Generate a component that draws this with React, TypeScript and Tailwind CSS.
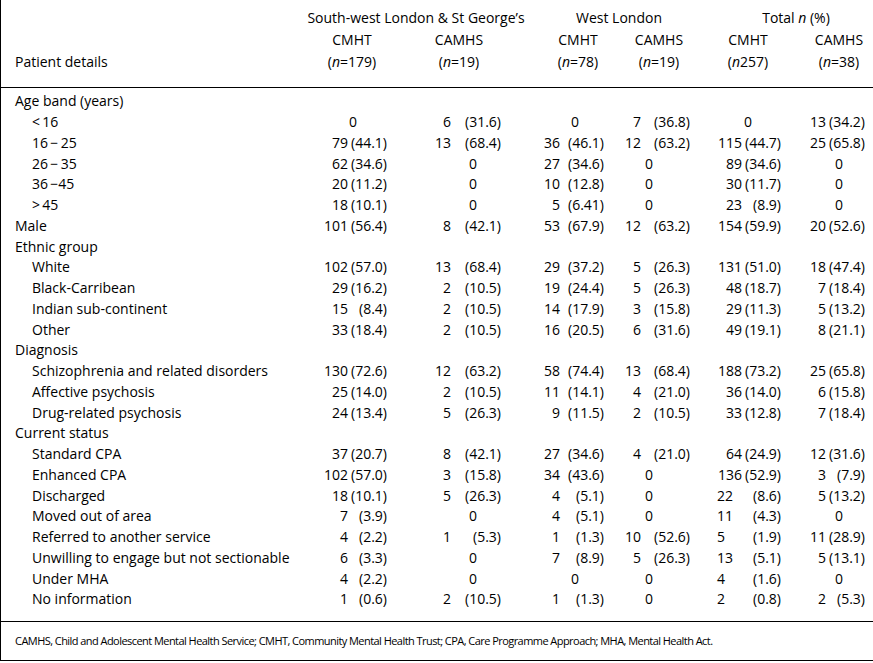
import React from "react";

type Cell = null | [string, string] | [string, string, "l"];

type Row = {
  label: string;
  cat?: boolean;
  cells?: Cell[];
};

// per-column geometry: column width, count span, pct span, zero offset, header offset
const cols = [
  { w: "w-[110px]", cnt: "w-[47px] text-right", cntL: "w-[47px] text-right", pct: "w-[39px]", zero: "ml-[32px]", hdr: "ml-[11px]" },
  { w: "w-[105px]", cnt: "w-[40px] text-right", cntL: "w-[40px] text-right", pct: "w-[50px]", zero: "ml-[42px]", hdr: "ml-[8px]" },
  { w: "w-[95px]", cnt: "w-[44px] text-right", cntL: "w-[44px] text-right", pct: "w-[44px]", zero: "ml-[39px]", hdr: "ml-[22px]" },
  { w: "w-[90px]", cnt: "w-[30px] text-right", cntL: "w-[30px] text-right", pct: "w-[49px]", zero: "ml-[18px]", hdr: "ml-[8px]" },
  { w: "w-[95px]", cnt: "w-[41px] text-right", cntL: "w-[41px] pl-[16px] text-left", pct: "w-[39px]", zero: "ml-[27px]", hdr: "ml-[7px]" },
  { w: "w-[78px]", cnt: "w-[30px] text-right", cntL: "w-[30px] text-right", pct: "w-[39px]", zero: "ml-[23px]", hdr: "ml-[3px]" },
];

const subHeads = [
  ["CMHT", "179"],
  ["CAMHS", "19"],
  ["CMHT", "78"],
  ["CAMHS", "19"],
  ["CMHT", "257"],
  ["CAMHS", "38"],
];

const rows: Row[] = [
  { label: "Age band (years)", cat: true },
  { label: "<\u200916", cells: [null, ["6", "(31.6)"], null, ["7", "(36.8)"], null, ["13", "(34.2)"]] },
  { label: "16\u2009\u2212\u200925", cells: [["79", "(44.1)"], ["13", "(68.4)"], ["36", "(46.1)"], ["12", "(63.2)"], ["115", "(44.7)"], ["25", "(65.8)"]] },
  { label: "26\u2009\u2212\u200935", cells: [["62", "(34.6)"], null, ["27", "(34.6)"], null, ["89", "(34.6)"], null] },
  { label: "36\u2009\u221245", cells: [["20", "(11.2)"], null, ["10", "(12.8)"], null, ["30", "(11.7)"], null] },
  { label: ">\u200945", cells: [["18", "(10.1)"], null, ["5", "(6.41)"], null, ["23", "(8.9)"], null] },
  { label: "Male", cat: true, cells: [["101", "(56.4)"], ["8", "(42.1)"], ["53", "(67.9)"], ["12", "(63.2)"], ["154", "(59.9)"], ["20", "(52.6)"]] },
  { label: "Ethnic group", cat: true },
  { label: "White", cells: [["102", "(57.0)"], ["13", "(68.4)"], ["29", "(37.2)"], ["5", "(26.3)"], ["131", "(51.0)"], ["18", "(47.4)"]] },
  { label: "Black-Carribean", cells: [["29", "(16.2)"], ["2", "(10.5)"], ["19", "(24.4)"], ["5", "(26.3)"], ["48", "(18.7)"], ["7", "(18.4)"]] },
  { label: "Indian sub-continent", cells: [["15", "(8.4)"], ["2", "(10.5)"], ["14", "(17.9)"], ["3", "(15.8)"], ["29", "(11.3)"], ["5", "(13.2)"]] },
  { label: "Other", cells: [["33", "(18.4)"], ["2", "(10.5)"], ["16", "(20.5)"], ["6", "(31.6)"], ["49", "(19.1)"], ["8", "(21.1)"]] },
  { label: "Diagnosis", cat: true },
  { label: "Schizophrenia and related disorders", cells: [["130", "(72.6)"], ["12", "(63.2)"], ["58", "(74.4)"], ["13", "(68.4)"], ["188", "(73.2)"], ["25", "(65.8)"]] },
  { label: "Affective psychosis", cells: [["25", "(14.0)"], ["2", "(10.5)"], ["11", "(14.1)"], ["4", "(21.0)"], ["36", "(14.0)"], ["6", "(15.8)"]] },
  { label: "Drug-related psychosis", cells: [["24", "(13.4)"], ["5", "(26.3)"], ["9", "(11.5)"], ["2", "(10.5)"], ["33", "(12.8)"], ["7", "(18.4)"]] },
  { label: "Current status", cat: true },
  { label: "Standard CPA", cells: [["37", "(20.7)"], ["8", "(42.1)"], ["27", "(34.6)"], ["4", "(21.0)"], ["64", "(24.9)"], ["12", "(31.6)"]] },
  { label: "Enhanced CPA", cells: [["102", "(57.0)"], ["3", "(15.8)"], ["34", "(43.6)"], null, ["136", "(52.9)"], ["3", "(7.9)"]] },
  { label: "Discharged", cells: [["18", "(10.1)"], ["5", "(26.3)"], ["4", "(5.1)"], null, ["22", "(8.6)", "l"], ["5", "(13.2)"]] },
  { label: "Moved out of area", cells: [["7", "(3.9)"], null, ["4", "(5.1)"], null, ["11", "(4.3)", "l"], null] },
  { label: "Referred to another service", cells: [["4", "(2.2)"], ["1", "(5.3)"], ["1", "(1.3)"], ["10", "(52.6)"], ["5", "(1.9)", "l"], ["11", "(28.9)"]] },
  { label: "Unwilling to engage but not sectionable", cells: [["6", "(3.3)"], null, ["7", "(8.9)"], ["5", "(26.3)"], ["13", "(5.1)", "l"], ["5", "(13.1)"]] },
  { label: "Under MHA", cells: [["4", "(2.2)"], null, null, null, ["4", "(1.6)", "l"], null] },
  { label: "No information", cells: [["1", "(0.6)"], ["2", "(10.5)"], ["1", "(1.3)"], null, ["2", "(0.8)", "l"], ["2", "(5.3)"]] },
];

function DataCell({ cell, i }: { cell: Cell; i: number }) {
  const c = cols[i];
  if (!cell) {
    return (
      <div className={`${c.w} shrink-0 flex`}>
        <span className={`${c.zero} w-[40px] text-center`}>0</span>
      </div>
    );
  }
  return (
    <div className={`${c.w} shrink-0 flex`}>
      <span className={cell[2] ? c.cntL : c.cnt}>{cell[0]}</span>
      <span className={`${c.pct} text-right`}>{cell[1]}</span>
    </div>
  );
}

export default function App() {
  return (
    <div className="w-[873px] h-[663px] bg-white text-black font-['Open_Sans',sans-serif] text-[14px]">
      <div className="border-l border-b border-black h-[661px] flex flex-col">
        {/* Column headings */}
        <div className="flex border-b border-black pt-[7px] pb-[14px]">
          <div className="w-[300px] shrink-0 pl-[14px] flex flex-col justify-end">
            <div className="h-[22px] leading-[22px]">Patient details</div>
          </div>
          <div className="flex flex-col">
            <div className="flex h-[22px] leading-[22px] whitespace-nowrap">
              <div className="w-[215px] shrink-0 pl-[15px] flex justify-center">
                <span>South-west London &amp; St George&rsquo;s</span>
              </div>
              <div className="w-[185px] shrink-0 pl-[21px] flex justify-center">
                <span>West London</span>
              </div>
              <div className="w-[173px] shrink-0 pl-[17px] flex justify-center">
                <span>
                  Total <i>n</i> (%)
                </span>
              </div>
            </div>
            <div className="flex h-[22px] leading-[22px]">
              {subHeads.map((h, i) => (
                <div key={i} className={`${cols[i].w} shrink-0 flex`}>
                  <span className={`${cols[i].hdr} w-[80px] shrink-0 text-center`}>{h[0]}</span>
                </div>
              ))}
            </div>
            <div className="flex h-[22px] leading-[22px]">
              {subHeads.map((h, i) => (
                <div key={i} className={`${cols[i].w} shrink-0 flex`}>
                  <span className={`${cols[i].hdr} w-[80px] shrink-0 text-center`}>
                    (<i>n</i>
                    {i === 4 ? "" : "="}
                    {h[1]})
                  </span>
                </div>
              ))}
            </div>
          </div>
        </div>

        {/* Body rows */}
        <div className="pt-[3px] pb-[11px] border-b border-black">
          {rows.map((r, ri) => (
            <div key={ri} className="flex items-center h-[20.75px] leading-[20px]">
              <div className={`w-[300px] shrink-0 whitespace-nowrap ${r.cat ? "pl-[14px]" : "pl-[31px]"}`}>{r.label}</div>
              {r.cells && r.cells.map((c, i) => <DataCell key={i} cell={c} i={i} />)}
            </div>
          ))}
        </div>

        {/* Footnote */}
        <div className="flex-1 flex items-center pl-[14px] text-[11px] tracking-[-0.55px] whitespace-nowrap">
          CAMHS, Child and Adolescent Mental Health Service; CMHT, Community Mental Health Trust; CPA, Care Programme
          Approach; MHA, Mental Health Act.
        </div>
      </div>
    </div>
  );
}
